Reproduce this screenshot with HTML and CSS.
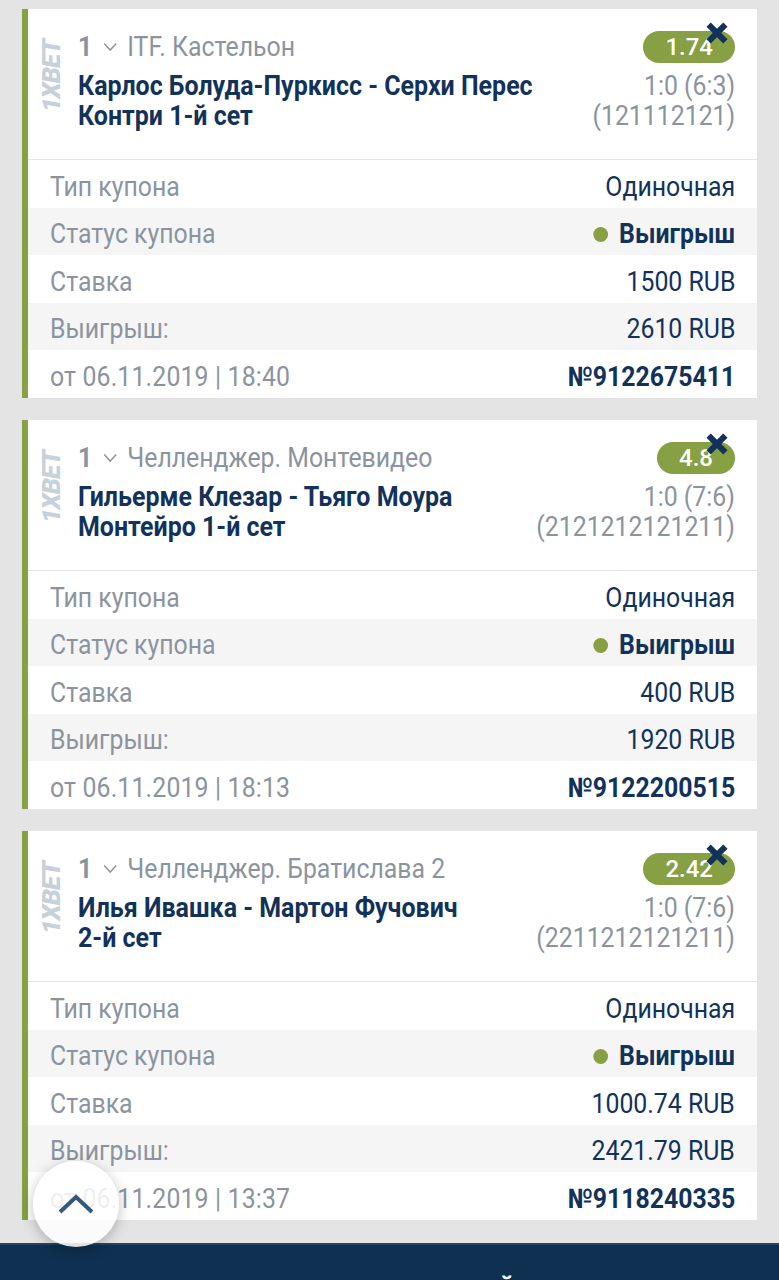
FILE: index.html
```html
<!DOCTYPE html>
<html lang="ru">
<head>
    <meta charset="UTF-8">
    <title>История ставок</title>
    <link rel="stylesheet" href="styles.css">
</head>
<body>

    <!-- Купон 1 -->
    <section class="kupon">
        <div class="kupon-head">
            <div class="logo">1XBET</div>
            <div class="kupon-info">
                <p class="liga"><b>1</b>
                    <svg class="strelka" viewBox="0 0 16 10"><path d="M1.500 1.500 8 8l6.500-6.500"/></svg>
                    ITF. Кастельон</p>
                <h3>Карлос Болуда-Пуркисс - Серхи Перес<br>Контри 1-й сет</h3>
            </div>
            <div class="kupon-kef">
                <span class="kef">1.74
                    <svg class="krest" viewBox="0 0 20 20"><path d="M3 3 17 17M17 3 3 17"/></svg>
                </span>
                <p class="schet">1:0 (6:3)<br>(121112121)</p>
            </div>
        </div>
        <div class="fila"><span>Тип купона</span><span class="valor">Одиночная</span></div>
        <div class="fila gris"><span>Статус купона</span><span class="valor fuerte"><i class="punto"></i>Выигрыш</span></div>
        <div class="fila"><span>Ставка</span><span class="valor">1500 RUB</span></div>
        <div class="fila gris"><span>Выигрыш:</span><span class="valor">2610 RUB</span></div>
        <div class="fila"><span class="fecha">от 06.11.2019 | 18:40</span><span class="valor fuerte">№9122675411</span></div>
    </section>

    <!-- Купон 2 -->
    <section class="kupon">
        <div class="kupon-head">
            <div class="logo">1XBET</div>
            <div class="kupon-info">
                <p class="liga"><b>1</b>
                    <svg class="strelka" viewBox="0 0 16 10"><path d="M1.500 1.500 8 8l6.500-6.500"/></svg>
                    Челленджер. Монтевидео</p>
                <h3>Гильерме Клезар - Тьяго Моура<br>Монтейро 1-й сет</h3>
            </div>
            <div class="kupon-kef">
                <span class="kef">4.8
                    <svg class="krest" viewBox="0 0 20 20"><path d="M3 3 17 17M17 3 3 17"/></svg>
                </span>
                <p class="schet">1:0 (7:6)<br>(2121212121211)</p>
            </div>
        </div>
        <div class="fila"><span>Тип купона</span><span class="valor">Одиночная</span></div>
        <div class="fila gris"><span>Статус купона</span><span class="valor fuerte"><i class="punto"></i>Выигрыш</span></div>
        <div class="fila"><span>Ставка</span><span class="valor">400 RUB</span></div>
        <div class="fila gris"><span>Выигрыш:</span><span class="valor">1920 RUB</span></div>
        <div class="fila"><span class="fecha">от 06.11.2019 | 18:13</span><span class="valor fuerte">№9122200515</span></div>
    </section>

    <!-- Купон 3 -->
    <section class="kupon">
        <div class="kupon-head">
            <div class="logo">1XBET</div>
            <div class="kupon-info">
                <p class="liga"><b>1</b>
                    <svg class="strelka" viewBox="0 0 16 10"><path d="M1.500 1.500 8 8l6.500-6.500"/></svg>
                    Челленджер. Братислава 2</p>
                <h3>Илья Ивашка - Мартон Фучович<br>2-й сет</h3>
            </div>
            <div class="kupon-kef">
                <span class="kef">2.42
                    <svg class="krest" viewBox="0 0 20 20"><path d="M3 3 17 17M17 3 3 17"/></svg>
                </span>
                <p class="schet">1:0 (7:6)<br>(2211212121211)</p>
            </div>
        </div>
        <div class="fila"><span>Тип купона</span><span class="valor">Одиночная</span></div>
        <div class="fila gris"><span>Статус купона</span><span class="valor fuerte"><i class="punto"></i>Выигрыш</span></div>
        <div class="fila"><span>Ставка</span><span class="valor">1000.74 RUB</span></div>
        <div class="fila gris"><span>Выигрыш:</span><span class="valor">2421.79 RUB</span></div>
        <div class="fila"><span class="fecha">от 06.11.2019 | 13:37</span><span class="valor fuerte">№9118240335</span></div>
    </section>

    <!-- Кнопка наверх -->
    <button class="arriba" aria-label="Наверх">
        <svg viewBox="0 0 36 20"><path d="M2 18 18 3l16 15"/></svg>
    </button>

    <footer class="pie"><span>й</span></footer>

</body>
</html>
```

FILE: styles.css
```css
html, body {
    height: 1280px;
    overflow: hidden;
}
body {
    margin: 0;
    background-color: #e4e4e4;
    font-family: Roboto, "Liberation Sans", sans-serif;
    font-size: 27px;
    color: #8b949e;
    display: flex;
    flex-direction: column;
    gap: 22px;
    padding: 9px 22px 0;
    box-sizing: border-box;
    position: relative;
}
p, h3 {
    margin: 0;
}
.kupon {
    background-color: white;
    border-left: 6px solid #86a043;
    height: 389px;
    flex: none;
}
.kupon-head {
    border-bottom: 1px solid #e6e6e6;
    display: flex;
    height: 150px;
    padding-right: 22px;
}
.logo {
    writing-mode: vertical-rl;
    transform: rotate(180deg);
    font-weight: 900;
    font-style: italic;
    font-size: 26px;
    color: #c6d1dc;
    width: 24px;
    height: 70px;
    margin: 33px 15px 0 11px;
    text-align: left;
    line-height: 24px;
    letter-spacing: -1px;
}
.kupon-info {
    flex: 1;
    padding-top: 22px;
    min-width: 0;
}
/* el texto del original es mas angosto que Roboto */
.liga {
    line-height: 32px;
    display: flex;
    align-items: center;
    gap: 11px;
    transform: scaleX(0.92);
    transform-origin: left;
    white-space: nowrap;
}
.liga b {
    font-weight: 700;
}
.strelka {
    width: 16px;
    height: 10px;
    fill: none;
    stroke: #8b949e;
    stroke-width: 1.6;
}
h3 {
    font-size: 27px;
    font-weight: 700;
    color: #12325a;
    line-height: 30px;
    margin-top: 8px;
    transform: scaleX(0.925);
    transform-origin: left;
    white-space: nowrap;
}
.kupon-kef {
    display: flex;
    flex-direction: column;
    align-items: flex-end;
    padding-top: 22px;
}
.kef {
    position: relative;
    background-color: #86a043;
    color: white;
    border-radius: 17px;
    height: 32px;
    line-height: 32px;
    padding: 0 22px;
    font-size: 24px;
    font-weight: 500;
}
.krest {
    position: absolute;
    top: -10px;
    right: 6px;
    width: 24px;
    height: 24px;
    fill: none;
    stroke: #12325a;
    stroke-width: 5;
}
.schet {
    text-align: right;
    line-height: 30px;
    margin-top: 8px;
    white-space: nowrap;
    transform: scaleX(0.92);
    transform-origin: right;
}
.fila {
    display: flex;
    justify-content: space-between;
    align-items: center;
    height: 47.5px;
    padding: 6px 22px 0;
    box-sizing: border-box;
}
.fila span {
    transform: scaleX(0.92);
    transform-origin: left;
}
.fila .fecha {
    letter-spacing: 0.16px;
}
.gris {
    background-color: #f5f5f5;
}
.fila .valor {
    color: #12325a;
    display: flex;
    align-items: center;
    transform-origin: right;
}
.fuerte {
    font-weight: 700;
}
.punto {
    width: 16px;
    height: 15px;
    border-radius: 50%;
    background-color: #86a043;
    margin-right: 12px;
}
.arriba {
    position: absolute;
    left: 33px;
    top: 1161px;
    width: 86px;
    height: 86px;
    border: none;
    border-radius: 50%;
    padding: 0;
    background-color: rgba(255, 255, 255, 0.85);
    box-shadow: 0 3px 14px rgba(0, 0, 0, 0.25);
    z-index: 10;
    display: flex;
    align-items: center;
    justify-content: center;
}
.arriba svg {
    width: 36px;
    height: 20px;
    fill: none;
    stroke: #35597d;
    stroke-width: 4;
}
.pie {
    position: absolute;
    left: 0;
    right: 0;
    top: 1243px;
    height: 37px;
    background-color: #0f3050;
    border-top: 2px solid #24446a;
    box-sizing: border-box;
    color: white;
    font-weight: 700;
    line-height: 32px;
    padding: 26px 0 0 499px;
    overflow: hidden;
}
```
